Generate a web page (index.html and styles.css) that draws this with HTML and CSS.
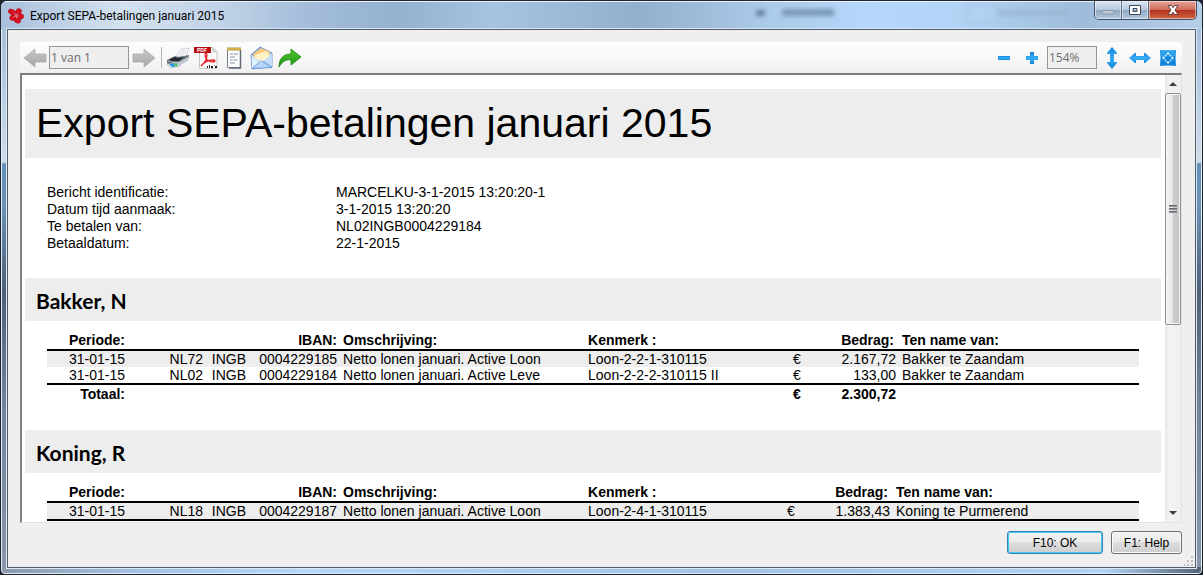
FILE: index.html
```html
<!DOCTYPE html>
<html lang="nl">
<head>
<meta charset="utf-8">
<title>Export SEPA-betalingen januari 2015</title>
<link rel="stylesheet" href="styles.css">
</head>
<body>
<div class="window">
  <header class="titlebar">
    <svg class="app-icon" viewBox="0 0 16 16" aria-hidden="true">
      <g fill="#d8101f" stroke="#a80818" stroke-width=".5"><ellipse cx="4" cy="4" rx="3.8" ry="2.6" transform="rotate(25 4 4)"/><ellipse cx="10.5" cy="3.6" rx="3.2" ry="2.7" transform="rotate(-50 10.5 3.6)"/><ellipse cx="12.7" cy="8.4" rx="3" ry="2.6"/><ellipse cx="9.4" cy="12.4" rx="3.5" ry="2.6" transform="rotate(20 9.4 12.4)"/><ellipse cx="4.600" cy="9.6" rx="3" ry="2.6" transform="rotate(-40 4.600 9.6)"/></g>
      <circle cx="8" cy="8" r="2" fill="#d8101f"/>
      <path d="M7.8 7.6 6.2 5.4M8 7.6l1.5-2M8.2 8l2.6 0M8 8.2l.8 2.2M7.6 8l-2 1" stroke="#fbd5d8" stroke-width=".6"/>
    </svg>
    <h1 class="window-title">Export SEPA-betalingen januari 2015</h1>
    <div class="glass" aria-hidden="true"><i class="glass-arrow"></i><i class="glass-label"></i><i class="glass-box"></i><i class="glass-text"></i></div>
    <div class="caption-buttons">
      <button class="cap" aria-label="Minimaliseren" disabled><svg width="14" height="12" viewBox="0 0 14 12"><rect x="1.5" y="6.5" width="11" height="3.5" rx="1" fill="#c3ccd6" stroke="#8c9baa"/></svg></button>
      <button class="cap" aria-label="Maximaliseren"><svg width="14" height="12" viewBox="0 0 14 12"><path d="M1.500 1.500h11v9h-11zM5 4.500v3h4v-3z" fill="#fff" fill-rule="evenodd" stroke="#3f4b5c"/></svg></button>
      <button class="cap cap-close" aria-label="Sluiten"><svg width="14" height="12" viewBox="0 0 14 12"><path d="M2 1.500h3.200L7 3.700l1.800-2.200H12L9 6l3 4.500H8.800L7 8.200l-1.800 2.300H2L5 6z" fill="#fff" stroke="#5a3538" stroke-width=".9"/></svg></button>
    </div>
  </header>

  <main class="client">
    <div class="toolbar">
      <button class="tool" aria-label="Vorige pagina" disabled><svg width="24" height="22" viewBox="0 0 24 22"><path d="M1 11 12 2v5h11v8H12v5z" fill="url(#gray)" stroke="#a5a5a5" stroke-width=".7"/></svg></button>
      <input class="field field-page" aria-label="Pagina" value="1 van 1" disabled>
      <button class="tool" aria-label="Volgende pagina" disabled><svg width="24" height="22" viewBox="0 0 24 22"><path d="M23 11 12 2v5H1v8h11v5z" fill="url(#gray)" stroke="#a5a5a5" stroke-width=".7"/></svg></button>
      <span class="separator"></span>
      <button class="tool tool-wide" aria-label="Afdrukken"><svg width="24" height="22" viewBox="0 0 24 22"><path d="m10 10 5-8 8-1-3 9z" fill="#f4f6f8" stroke="#b7bcc2" stroke-width=".6"/><path d="m14 8 4-5m-2 6 4-6" stroke="#cfd4da" stroke-width=".7"/><path d="m1 13 8-4 3 1 6-1 5-1-1 5-8 5-10 1-3-3z" fill="#6a727c"/><path d="m4 12 5-2 3 1 6-1-5 4-8 1z" fill="#252a31"/><path d="m1 14 12 1 9-5v3l-8 5z" fill="#c3c9cf"/><path d="m1 17 11-1 2 3-9 2z" fill="#e9f2fa" stroke="#8c97a3" stroke-width=".5"/><path d="m3 17 5-.5 1 3-3 .5z" fill="#2296e0"/><path d="m8 16.500 3-.4 1 3-3 .5z" fill="#51b862"/></svg></button>
      <button class="tool tool-wide" aria-label="Exporteren naar PDF"><svg width="26" height="24" viewBox="0 0 26 24"><path d="M6.500 1.500H20l4 4v17H6.500z" fill="#fcfcfc" stroke="#c6c6c6"/><path d="M19.500 1.500V6H24z" fill="#ddd" stroke="#bbb" stroke-width=".5"/><path d="M1 1h17v6H1z" fill="#b80d12"/><text x="4" y="6" class="pdf-word">PDF</text><path d="M8 20c3-2 6-7 6-11 0-2-2-2-2 0 0 4 4 7 8 7 3 0 2-2 0-2-4 0-9 2-12 6z" fill="none" stroke="#e31b23" stroke-width="1.300"/><path d="M14 20h1v2h-1zM16 19h1v3h-1zM18 20h2v2h-2zM21 19h1v3h2v-2h-2z" fill="#222"/></svg></button>
      <button class="tool tool-wide" aria-label="Exporteren naar tekst"><svg width="18" height="24" viewBox="0 0 18 24"><path d="M2.500 3.500h13v18h-13z" fill="#fafbfc" stroke="#777f8b"/><path d="M15.500 4v18H4" fill="none" stroke="#616a77" stroke-width="1.500"/><path d="M2 2h14v2H2z" fill="#f4d264"/><path d="M3 1v4M5 1v4M7 1v4M9 1v4M11 1v4M13 1v4M15 1v4" stroke="#a08022" stroke-width=".8"/><path d="M5 8h3m1 0h4M5 11h5M5 14h3m1 0h3M5 17h5" stroke="#8794a6"/></svg></button>
      <button class="tool tool-wide" aria-label="Verzenden per e-mail"><svg width="24" height="24" viewBox="0 0 24 24"><path d="m1 9 9-8 12 6v14l-20 2z" fill="#78a8e2" stroke="#6287c4" stroke-width=".8"/><path d="m3 8 8-6 9 4-1 6-7 4-8-5z" fill="#fbc87c"/><path d="m5 9 11-4 3 3-1 4-6 4-7-4z" fill="#fff1c5"/><path d="m1.500 10 8.500 6L2 22.500z" fill="#dff0ff"/><path d="m22 8-9 7 9 6z" fill="#c4defa"/><path d="m2 22.500 9-8 11 7z" fill="#b4d6fb" stroke="#5c8cd0" stroke-width=".7"/><path d="m1.500 9.500 9.500 6 10.500-8" fill="none" stroke="#fff" stroke-width=".8"/></svg></button>
      <button class="tool tool-wide" aria-label="Delen"><svg width="24" height="22" viewBox="0 0 24 22"><path d="M1 20C1 11 6 7 13 7V2l10 8-10 8v-5C8 12 4 15 1 20z" fill="url(#green)" stroke="#168316" stroke-width=".8"/></svg></button>
      <span class="spacer"></span>
      <button class="tool tool-zoom" aria-label="Uitzoomen"><svg width="14" height="14" viewBox="0 0 14 14"><path d="M1 5h12v4H1z" fill="url(#blue)"/></svg></button>
      <button class="tool tool-zoom" aria-label="Inzoomen"><svg width="14" height="14" viewBox="0 0 14 14"><path d="M5 1h4v4h4v4H9v4H5V9H1V5h4z" fill="url(#blue)"/></svg></button>
      <input class="field field-zoom" aria-label="Zoom" value="154%" disabled>
      <button class="tool tool-fit" aria-label="Paginahoogte"><svg width="12" height="22" viewBox="0 0 12 22"><path d="m6 0 5 6v1H8v8h3v1l-5 6-5-6v-1h3V7H1V6z" fill="url(#blue)"/></svg></button>
      <button class="tool tool-fit" aria-label="Paginabreedte"><svg width="22" height="12" viewBox="0 0 22 12"><path d="m0 6 6-5h1v3h8V1h1l6 5-6 5h-1V8H7v3H6z" fill="url(#blue)"/></svg></button>
      <button class="tool tool-fit" aria-label="Hele pagina"><svg width="18" height="18" viewBox="0 0 18 18"><path d="M1 1q8 1 16 0-1 8 0 16-8-1-16 0 1-8 0-16z" fill="#1286dc"/><path d="M1 1q8 1 16 0-1 4-1 6L2 9q0-4-1-8z" fill="#2ba2ee"/><path d="m9 3 2 2.500H7zM9 15l2-2.500H7zM3 9l2.500-2v4zM15 9l-2.500-2v4z" fill="#e8f6ff"/><path d="m6 6 1 1m5-1-1 1m-5 5 1-1m5 1-1-1" stroke="#d4eeff" stroke-width="1.200"/></svg></button>
      <svg width="0" height="0" aria-hidden="true"><defs><linearGradient id="gray" x2="0" y2="1"><stop stop-color="#c9c9c9"/><stop offset="1" stop-color="#a6a6a6"/></linearGradient><linearGradient id="green" x2="0" y2="1"><stop stop-color="#58c92c"/><stop offset="1" stop-color="#159315"/></linearGradient><linearGradient id="blue" x2="0" y2="1"><stop stop-color="#1581d8"/><stop offset=".5" stop-color="#37aef6"/><stop offset="1" stop-color="#1587dc"/></linearGradient></defs></svg>
    </div>

    <div class="viewer">
      <article class="report">
        <h2 class="report-title">Export SEPA-betalingen januari 2015</h2>
        <dl class="details">
          <dt>Bericht identificatie:</dt><dd>MARCELKU-3-1-2015 13:20:20-1</dd>
          <dt>Datum tijd aanmaak:</dt><dd>3-1-2015 13:20:20</dd>
          <dt>Te betalen van:</dt><dd>NL02INGB0004229184</dd>
          <dt>Betaaldatum:</dt><dd>22-1-2015</dd>
        </dl>

        <section class="person">
          <h3 class="person-name">Bakker, N</h3>
          <table class="payments">
            <colgroup><col class="c-period"><col class="c-country"><col class="c-bank"><col class="c-account"><col class="c-description"><col class="c-reference"><col class="c-currency"><col class="c-amount"><col></colgroup>
            <thead><tr><th class="num">Periode:</th><th class="num" colspan="3">IBAN:</th><th>Omschrijving:</th><th>Kenmerk :</th><th></th><th class="num amount-head">Bedrag:</th><th>Ten name van:</th></tr></thead>
            <tbody>
              <tr><td class="num">31-01-15</td><td class="num">NL72</td><td class="num">INGB</td><td class="num">0004229185</td><td>Netto lonen januari. Active Loon</td><td>Loon-2-2-1-310115</td><td>€</td><td class="num">2.167,72</td><td>Bakker te Zaandam</td></tr>
              <tr><td class="num">31-01-15</td><td class="num">NL02</td><td class="num">INGB</td><td class="num">0004229184</td><td>Netto lonen januari. Active Leve</td><td>Loon-2-2-2-310115 II</td><td>€</td><td class="num">133,00</td><td>Bakker te Zaandam</td></tr>
            </tbody>
            <tfoot><tr><th class="num">Totaal:</th><td colspan="5"></td><td>€</td><td class="num">2.300,72</td><td></td></tr></tfoot>
          </table>
        </section>

        <section class="person">
          <h3 class="person-name">Koning, R</h3>
          <table class="payments">
            <colgroup><col class="c-period"><col class="c-country"><col class="c-bank"><col class="c-account"><col class="c-description"><col class="c-reference-narrow"><col class="c-currency"><col class="c-amount"><col></colgroup>
            <thead><tr><th class="num">Periode:</th><th class="num" colspan="3">IBAN:</th><th>Omschrijving:</th><th>Kenmerk :</th><th></th><th class="num amount-head">Bedrag:</th><th>Ten name van:</th></tr></thead>
            <tbody>
              <tr><td class="num">31-01-15</td><td class="num">NL18</td><td class="num">INGB</td><td class="num">0004229187</td><td>Netto lonen januari. Active Loon</td><td>Loon-2-4-1-310115</td><td>€</td><td class="num">1.383,43</td><td>Koning te Purmerend</td></tr>
            </tbody>
          </table>
        </section>
      </article>
      <div class="scrollbar" aria-hidden="true">
        <svg class="scroll-arrow" viewBox="0 0 16 18"><path d="m8 7 4 4H4z" fill="#404040"/></svg>
        <div class="thumb"><i></i><i></i><i></i></div>
        <span class="spacer"></span>
        <svg class="scroll-arrow" viewBox="0 0 16 18"><path d="m8 11 4-4H4z" fill="#404040"/></svg>
      </div>
    </div>

    <footer class="actions">
      <button class="button button-default">F10: OK</button>
      <button class="button">F1: Help</button>
    </footer>
    <svg class="grip" width="10" height="10" viewBox="0 0 10 10" aria-hidden="true"><path d="M7 0h2v2H7zM7 4h2v2H7zM3 4h2v2H3zM7 8h2v2H7zM3 8h2v2H3zM0 8h1v2H0z" fill="#bdbdbd"/></svg>
  </main>
</div>
</body>
</html>
```
FILE: styles.css
```css
* { box-sizing: border-box; }

body {
  margin: 0;
  background: #20242e;
  font-family: "Liberation Sans", Arial, sans-serif;
  color: #000;
}

h1, h2, h3, dl, dd { margin: 0; font-weight: normal; }
button, input { margin: 0; padding: 0; font: inherit; }
svg { display: block; }

.window {
  display: flex;
  flex-direction: column;
  height: 100vh;
  padding: 0 6px 6px;
  border: 1px solid #20242e;
  border-radius: 7px 7px 5px 5px;
  background:
    linear-gradient(90deg, #8a98aa, #a2bfdf 10%, #b5d8fb 25%, #a4c3e3 60%, #b1d3f5 92%, #536273) bottom / 100% 7px no-repeat,
    linear-gradient(#a1b9d5, #b5cbe3 80px, #cfdbe8 161px, #6490ba 163px, #6b92b6 205px, #506078 290px, #72829a 400px, #8998aa);
  box-shadow: inset 0 0 0 1px #e2edf8;
  overflow: hidden;
}

/* Title bar */
.titlebar {
  display: flex;
  position: relative;
  flex: none;
  align-items: center;
  height: 28px;
  margin: 0 -6px;
  padding-left: 7px;
  border-top: 1px solid #edf5fc;
  background:
    linear-gradient(90deg, #a9c0dc, #d3e1ef 10%, #c2d3e8 18%, #a2bcd9 26%, #94b1d0 33%, #a6c3e2 41%, #92afcd 53%, #accae9 64%, #b5d7fa 72%, #b1d2f3 82%, #9fbcdc 90%, #b5cfe8);
}
.app-icon { width: 16px; height: 16px; }
.window-title { margin-left: 6px; font: 12px/16px Roboto, sans-serif; white-space: nowrap; }
.glass { position: absolute; top: 3px; right: 110px; width: 340px; height: 18px; filter: blur(2px); }
.glass i { position: absolute; }
.glass-arrow { left: 4px; top: 5px; width: 9px; height: 6px; background: #6583a1; }
.glass-label { left: 30px; top: 4px; width: 52px; height: 7px; background: #7c99b7; }
.glass-box { left: 214px; top: 0; width: 120px; height: 18px; border: 1px solid #9db9d7; }
.glass-text { left: 245px; top: 5px; width: 73px; height: 6px; background: #9bb7d5; }

.caption-buttons {
  display: flex;
  position: relative;
  align-self: flex-start;
  height: 19px;
  margin: -1px 5px 0 auto;
  border: 1px solid #434f60;
  border-top: 0;
  border-radius: 0 0 5px 5px;
  overflow: hidden;
}
.cap {
  display: grid;
  place-items: center;
  width: 27px;
  border: 0;
  border-right: 1px solid #59697d;
  background: linear-gradient(#dce7f2, #b5c8dc 48%, #8fa8c3 50%, #b2cae0);
  box-shadow: inset 0 0 0 1px #ffffff80;
}
.cap-close { width: 47px; border-right: 0; background: linear-gradient(#e5a699, #cf6c5c 48%, #b52f1c 50%, #cf6642); }

/* Client area */
.client {
  display: flex;
  position: relative;
  flex: 1;
  flex-direction: column;
  min-height: 0;
  padding: 12px 13px 13px 12px;
  border: 1px solid #4e5c6c;
  background: #efefef;
  box-shadow: 0 0 0 1px #dbe8f4;
}

.toolbar {
  display: flex;
  flex: none;
  align-items: center;
  height: 31px;
  padding-left: 2px;
  border-radius: 3px 3px 0 0;
  background: linear-gradient(#fdfdfd, #f6f6f6 60%, #efefef);
}
.tool { display: grid; place-items: center; width: 25px; height: 26px; border: 0; background: none; }
.tool-wide, .tool-zoom, .tool-fit { width: 28px; }
.field {
  height: 23px;
  margin: 0 2px;
  padding-left: 1px;
  border: 1px solid #969696;
  background: #efefef;
  color: #6d6d6d;
  font: 12px/20px "Open Sans", sans-serif;
}
.field-page { width: 80px; }
.field-zoom { width: 50px; margin: 0 1px; }
.separator { width: 1px; height: 21px; margin: 0 2px 0 5px; background: #b5b5b5; }
.spacer { flex: 1; }
.pdf-word { font: bold 5px "Liberation Sans", sans-serif; fill: #fff; }

/* Report */
.viewer {
  display: flex;
  flex: 1;
  min-height: 0;
  border: solid;
  border-width: 2px 1px 1px 2px;
  border-color: #7c7c7c #e3e3e3 #e3e3e3 #808080;
  background: #fff;
}
.report {
  flex: 1;
  min-width: 0;
  padding: 14px 4px 0 3px;
  overflow: hidden;
  font-size: 14px;
  line-height: 16px;
}
.report-title { padding: 10px 11px 11px; background: #ededed; font-size: 41px; line-height: 48px; }
.details {
  display: grid;
  grid-template-columns: 289px 1fr;
  margin: 26px 22px;
  line-height: 17px;
}
.person + .person { margin-top: 27px; }
.person-name {
  padding: 11px 11px 8px;
  background: #ededed;
  font: bold 21px/24px Lato, sans-serif;
}
.payments {
  width: calc(100% - 44px);
  margin: 10px 22px 0;
  border-spacing: 0;
  table-layout: fixed;
}
.payments th, .payments td { padding: 0 0 0 6px; text-align: left; white-space: nowrap; }
.payments .num { padding-left: 0; text-align: right; }
.payments thead th { padding-top: 1px; padding-bottom: 1px; border-bottom: 2px solid #000; }
.payments .amount-head { padding-right: 2px; }
.payments tbody tr:nth-child(odd) { background: #ededed; }
.payments tbody tr:last-child td { border-bottom: 2px solid #000; }
.payments tfoot td { height: 18px; font-weight: bold; }
.c-period, .c-country { width: 78px; }
.c-bank { width: 43px; }
.c-account { width: 91px; }
.c-description { width: 245px; }
.c-reference { width: 205px; }
.c-reference-narrow { width: 199px; }
.c-currency { width: 26px; }
.c-amount { width: 83px; }

.scrollbar {
  display: flex;
  flex: none;
  flex-direction: column;
  width: 16px;
  background: linear-gradient(90deg, #e8e8e8, #f3f3f3 30%, #efefef);
}
.scroll-arrow { flex: none; width: 16px; height: 18px; }
.thumb {
  display: flex;
  flex: 0 0 52%;
  flex-direction: column;
  align-items: center;
  justify-content: center;
  gap: 1px;
  border: 1px solid #8f8f8f;
  border-radius: 2px;
  background: linear-gradient(90deg, #f6f6f6, #e6e6e7 45%, #cecfd2 50%, #c2c3c7);
  box-shadow: inset 0 0 0 1px #f4f4f4;
}
.thumb i { width: 8px; height: 2px; background: linear-gradient(#55585c, #a0a2a5); }

/* Buttons under the report */
.actions { display: flex; flex: none; justify-content: flex-end; gap: 8px; margin-top: 8px; }
.button {
  width: 71px;
  height: 23px;
  border: 1px solid #707070;
  border-radius: 3px;
  background: linear-gradient(#f2f2f2, #ebebeb 48%, #dddddd 50%, #cfcfcf);
  box-shadow: inset 0 0 0 1px #fafafa;
  font-size: 12px;
}
.button-default { width: 96px; border-color: #3c7fb1; box-shadow: inset 0 0 0 1px #3fcdf4; }
.grip { position: absolute; right: 1px; bottom: 1px; }
```
